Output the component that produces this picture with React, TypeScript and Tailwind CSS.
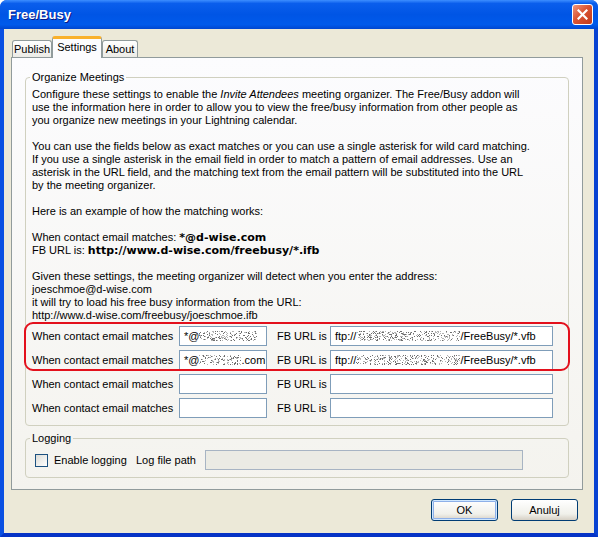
import React from "react";

// deterministic noise used for the blurred-out parts of the addresses
const Scribble = ({ width, seed }: { width: number; seed: number }) => {
  let s = seed;
  const rand = () => {
    s = (s * 9301 + 49297) % 233280;
    return s / 233280;
  };
  const dots: React.ReactNode[] = [];
  for (let x = 0; x < width; x++) {
    for (let y = 0; y < 10; y++) {
      if (rand() < 0.3) {
        dots.push(<rect key={`${x}-${y}`} x={x} y={y} width={1} height={1} fill={rand() < 0.5 ? "#6e6e6e" : "#b4b4b4"} />);
      }
    }
  }
  return (
    <svg width={width} height={10} className="inline-block shrink-0">
      {dots}
    </svg>
  );
};

const Bold = ({ children }: { children: React.ReactNode }) => (
  <b className="font-['DejaVu_Sans',sans-serif] font-bold">{children}</b>
);

const TEXT_LINES: (React.ReactNode | null)[] = [
  <>Configure these settings to enable the <i>Invite Attendees</i> meeting organizer. The Free/Busy addon will</>,
  "use the information here in order to allow you to view the free/busy information from other people as",
  "you organize new meetings in your Lightning calendar.",
  null,
  "You can use the fields below as exact matches or you can use a single asterisk for wild card matching.",
  "If you use a single asterisk in the email field in order to match a pattern of email addresses. Use an",
  "asterisk in the URL field, and the matching text from the email pattern will be substituted into the URL",
  "by the meeting organizer.",
  null,
  "Here is an example of how the matching works:",
  null,
  <>When contact email matches: <Bold>*@d-wise.com</Bold></>,
  <>FB URL is: <Bold>http://www.d-wise.com/freebusy/*.ifb</Bold></>,
  null,
  "Given these settings, the meeting organizer will detect when you enter the address:",
  "joeschmoe@d-wise.com",
  "it will try to load his free busy information from the URL:",
  "http://www.d-wise.com/freebusy/joeschmoe.ifb",
];

const Field = ({ className, children }: { className: string; children?: React.ReactNode }) => (
  <div className={`flex h-[20px] items-center overflow-hidden whitespace-nowrap border border-[#7F9DB9] bg-white px-[4px] ${className}`}>
    {children}
  </div>
);

const ROWS: { email: React.ReactNode; url: React.ReactNode }[] = [
  {
    email: <>*@<Scribble width={58} seed={11} /></>,
    url: <>ftp://<Scribble width={104} seed={37} />/FreeBusy/*.vfb</>,
  },
  {
    email: <>*@<Scribble width={42} seed={73} />.com</>,
    url: <>ftp://<Scribble width={104} seed={91} />/FreeBusy/*.vfb</>,
  },
  { email: null, url: null },
  { email: null, url: null },
];

const Tab = ({ label, active, width }: { label: string; active?: boolean; width: string }) => (
  <div
    className={`flex items-center justify-center rounded-t-[3px] border border-b-0 ${width} ${
      active
        ? "relative z-10 -mb-px h-[22px] border-[#919B9C] border-t-[3px] border-t-[#F9B12C] bg-[#FCFCFE] pb-[2px]"
        : "h-[17px] border-[#919B9C] bg-[linear-gradient(#FFFFFF,#ECEBE6)] pt-px"
    }`}
  >
    {label}
  </div>
);

const Button = ({ label, primary }: { label: string; primary?: boolean }) => (
  <button
    type="button"
    className={`h-[22px] w-[67px] rounded-[3px] border border-[#003C74] bg-[linear-gradient(#FFFFFF,#F0F0EA_70%,#D6D0C5)] text-[11px] ${
      primary ? "shadow-[inset_0_0_0_1px_#CEE7FF,inset_0_0_0_2px_#8EB0E8]" : ""
    }`}
  >
    {label}
  </button>
);

export default function App() {
  return (
    <div className="flex h-[537px] w-[598px] flex-col overflow-hidden rounded-t-[7px] bg-[#0A48DA] font-['Liberation_Sans','DejaVu_Sans',sans-serif] text-[11px] leading-[13px] text-black">
      {/* title bar */}
      <div className="flex h-[29px] shrink-0 items-center justify-between bg-[linear-gradient(#3D8EFF_0%,#0A5EEC_12%,#0055E5_50%,#005AEB_85%,#0046CF_100%)] pl-[8px] pr-[5px]">
        <span className="text-[13px] font-bold text-white [text-shadow:1px_1px_0_#0A1883]">Free/Busy</span>
        <div className="flex h-[21px] w-[21px] items-center justify-center rounded-[3px] border border-white bg-[linear-gradient(135deg,#F0977D,#DA5433_45%,#C13A1B)]">
          <svg width="11" height="11" viewBox="0 0 11 11">
            <path d="M1.5 1.5L9.5 9.5M9.5 1.5L1.5 9.5" stroke="white" strokeWidth="2.2" strokeLinecap="square" />
          </svg>
        </div>
      </div>

      {/* body */}
      <div className="flex flex-1 flex-col border-b-4 border-l-4 border-r-4 border-b-[#0533C6] border-l-[#0A50E2] border-r-[#0842D2] bg-[#ECE9D8] pl-[7px] pr-[11px] pt-[7px]">
        <div className="ml-px flex items-end">
          <Tab label="Publish" width="w-[40px]" />
          <Tab label="Settings" width="w-[50px]" active />
          <Tab label="About" width="w-[36px]" />
        </div>

        <div className="flex h-[433px] flex-col border border-[#919B9C] bg-[linear-gradient(#FCFCFE,#F4F3EE)] px-[13px]">
          <fieldset className="mt-[13px] rounded-[4px] border border-[#D0D0BF] pb-[7px] pl-[6px]">
            <legend className="-ml-[2px] px-[2px]">Organize Meetings</legend>
            <div className="pt-[4px]">
              {TEXT_LINES.map((line, i) => (
                <div key={i} className="h-[13px] whitespace-nowrap">
                  {line}
                </div>
              ))}
            </div>

            <div className="relative mt-[4px] flex flex-col gap-[4px]">
              <div className="pointer-events-none absolute left-[-8px] top-[-4px] h-[49px] w-[546px] rounded-[9px] border-2 border-[#E3101C]" />
              {ROWS.map((row, i) => (
                <div key={i} className="flex items-center">
                  <span className="w-[147px]">When contact email matches</span>
                  <Field className="w-[88px]">{row.email}</Field>
                  <span className="ml-[10px] w-[53px]">FB URL is</span>
                  <Field className="w-[223px]">{row.url}</Field>
                </div>
              ))}
            </div>
          </fieldset>

          <fieldset className="mt-[6px] rounded-[4px] border border-[#D0D0BF] pb-[7px] pl-[9px]">
            <legend className="-ml-[5px] px-[2px]">Logging</legend>
            <div className="mt-[5px] flex items-center">
              <div className="h-[13px] w-[13px] border border-[#1C5180] bg-[linear-gradient(135deg,#DCDCD7,#FFFFFF)]" />
              <span className="ml-[6px] w-[82px]">Enable logging</span>
              <span className="w-[69px]">Log file path</span>
              <div className="h-[20px] w-[318px] border border-[#A7B4C3] bg-[#EBEBE4]" />
            </div>
          </fieldset>
        </div>

        <div className="mt-[9px] flex justify-end gap-[13px] pr-[5px]">
          <Button label="OK" primary />
          <Button label="Anuluj" />
        </div>
      </div>
    </div>
  );
}
